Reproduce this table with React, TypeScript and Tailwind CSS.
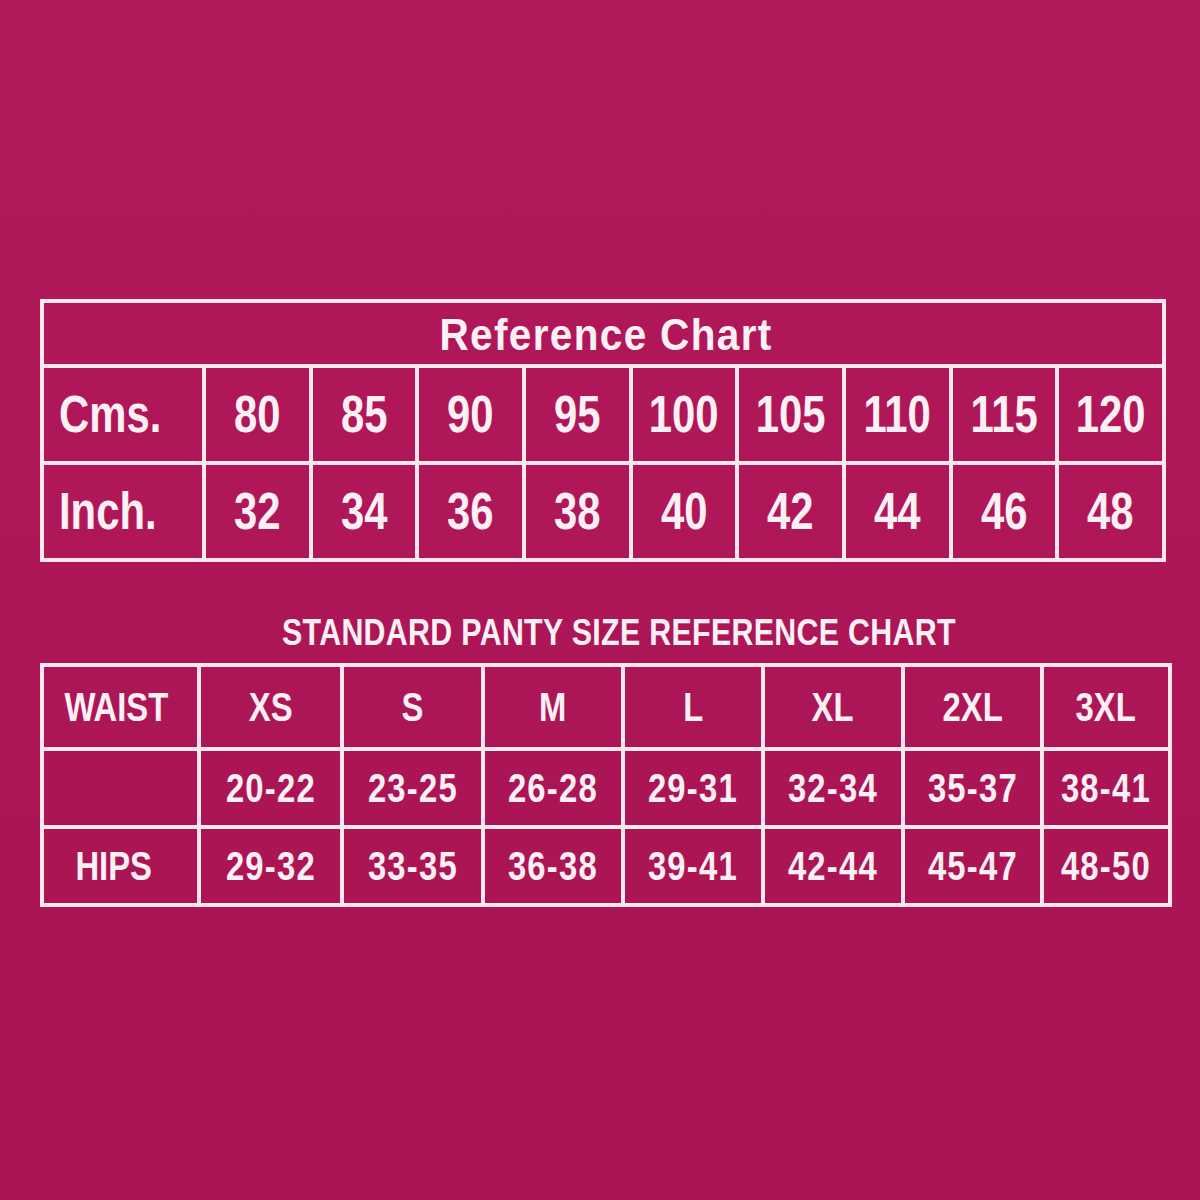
import React from "react";

const font = { fontFamily: '"Liberation Sans", Arial, sans-serif' };

const cms = ["80", "85", "90", "95", "100", "105", "110", "115", "120"];
const inch = ["32", "34", "36", "38", "40", "42", "44", "46", "48"];
const sizes = ["XS", "S", "M", "L", "XL", "2XL", "3XL"];
const waist = ["20-22", "23-25", "26-28", "29-31", "32-34", "35-37", "38-41"];
const hips = ["29-32", "33-35", "36-38", "39-41", "42-44", "45-47", "48-50"];

function N({ children, left = false, className = "" }: { children: React.ReactNode; left?: boolean; className?: string }) {
  return (
    <span
      className={
        "inline-block whitespace-nowrap " + (left ? "origin-left " : "origin-center ") + (className || "scale-x-[0.82]")
      }
    >
      {children}
    </span>
  );
}

export default function App() {
  return (
    <div
      className="w-[1200px] h-[1200px] bg-gradient-to-b from-[#b2195b] to-[#a91352] text-[#fdf0f5] font-bold flex flex-col pt-[299px] pl-[40px]"
      style={font}
    >
      {/* Top table */}
      <div className="w-[1126px] bg-[#fbe8ef] p-[4px] flex flex-col gap-[4px]">
        <div className="h-[61px] bg-[#b01759] flex items-center justify-center text-[45px] leading-none pt-[2px] pl-[6px]">
          <N className="scale-x-[0.9] tracking-[1.5px]">Reference Chart</N>
        </div>
        <div className="grid grid-cols-[158px_repeat(9,1fr)] gap-[4px]">
          <div className="h-[93px] bg-[#b01759] flex items-center pl-[15px] text-[51px] leading-none">
            <N left>Cms.</N>
          </div>
          {cms.map((v) => (
            <div key={v} className="h-[93px] bg-[#b01759] flex items-center justify-center text-[51px] leading-none">
              <N>{v}</N>
            </div>
          ))}
          <div className="h-[93px] bg-[#af1758] flex items-center pl-[15px] text-[51px] leading-none">
            <N left>Inch.</N>
          </div>
          {inch.map((v) => (
            <div key={v} className="h-[93px] bg-[#af1758] flex items-center justify-center text-[51px] leading-none">
              <N>{v}</N>
            </div>
          ))}
        </div>
      </div>

      {/* Heading */}
      <div className="w-[1132px] mt-[52px] pl-[26px] flex justify-center text-[37px] leading-none">
        <N className="scale-x-[0.82] tracking-[0.4px]">STANDARD PANTY SIZE REFERENCE CHART</N>
      </div>

      {/* Bottom table */}
      <div className="w-[1132px] mt-[12px] bg-[#fbe8ef] p-[4px] grid grid-cols-[153px_139px_137px_136px_136px_136px_135px_124px] grid-rows-[80px_74px_74px] gap-[4px] text-[40px] leading-none">
        <div className="bg-[#ad1656] flex items-center justify-center pr-[8px]">
          <N>WAIST</N>
        </div>
        {sizes.map((s) => (
          <div key={s} className="bg-[#ad1656] flex items-center justify-center">
            <N>{s}</N>
          </div>
        ))}
        <div className="bg-[#ac1555]" />
        {waist.map((s) => (
          <div key={s} className="bg-[#ac1555] flex items-center justify-center">
            <N className="scale-x-[0.82] tracking-[1.5px]">{s}</N>
          </div>
        ))}
        <div className="bg-[#ab1554] flex items-center justify-center pr-[14px]">
          <N>HIPS</N>
        </div>
        {hips.map((s) => (
          <div key={s} className="bg-[#ab1554] flex items-center justify-center">
            <N className="scale-x-[0.82] tracking-[1.5px]">{s}</N>
          </div>
        ))}
      </div>
    </div>
  );
}
